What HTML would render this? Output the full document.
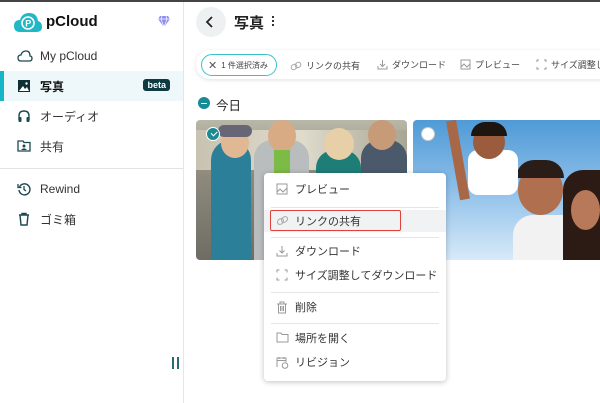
<!DOCTYPE html>
<html><head><meta charset="utf-8"><style>
*{margin:0;padding:0;box-sizing:border-box}
body{width:600px;height:403px;overflow:hidden;background:#fff;font-family:"Liberation Sans","Noto Sans CJK JP",sans-serif;position:relative;color:#222;white-space:nowrap}
.abs{position:absolute}
.topbar{left:0;top:0;width:600px;height:2px;background:#444}
.side{left:0;top:2px;width:184px;height:401px;border-right:1px solid #e6e6e6}
.item{position:absolute;left:0;width:183px;height:30px;font-size:12px;color:#333;display:flex;align-items:center;padding-left:40px}
.item svg{position:absolute;left:17px;top:8px}
.sel{background:#eef8fa;border-left:4px solid #17b6c6;padding-left:36px}
.sel svg{left:13px}
.beta{position:absolute;right:13px;top:8px;background:#0e3b42;color:#fff;font-size:9px;font-weight:bold;padding:1px 4px;border-radius:3px}
.tb{font-size:9px;color:#444;display:flex;align-items:center;gap:4px}
.menu{left:264px;top:173px;width:182px;height:208px;background:#fff;border-radius:4px;box-shadow:0 1px 6px rgba(0,0,0,.25)}
.mi{position:absolute;left:0;width:182px;height:22px;font-size:11px;color:#333;display:flex;align-items:center;padding-left:31px}
.mi svg{position:absolute;left:12px;top:5px}
.sep{position:absolute;left:7px;width:168px;height:1px;background:#e6e6e6}
</style></head><body>
<div class="abs topbar"></div>
<div class="abs side">
  <svg class="abs" style="left:13px;top:10px" width="30" height="22" viewBox="0 0 30 22"><path d="M7 20 Q1 20 1 14 Q1 8 7 8 Q9 1 16 1 Q24 1 25 9 Q29 10 29 15 Q29 20 23 20Z" fill="#20b7c6"/><circle cx="15" cy="11" r="6" fill="none" stroke="#fff" stroke-width="1.6"/><text x="12.3" y="14.5" fill="#fff" font-size="9" font-weight="bold" font-family="Liberation Sans">P</text></svg>
  <div class="abs" style="left:46px;top:11px;font-size:15px;font-weight:bold;color:#111">pCloud</div>
  <svg class="abs" style="left:157px;top:13px" width="14" height="13" viewBox="0 0 14 13"><path d="M3 1H11L13 4L7 12L1 4Z" fill="#8c8cf0"/><path d="M1 4H13M5 1L4 4L7 12L10 4L9 1" stroke="#fff" stroke-width=".7" fill="none"/></svg>
  <div class="item" style="top:39px"><svg width="16" height="14" viewBox="0 0 16 14"><path d="M4 12Q1 12 1 9Q1 6 4 6Q5 2 9 2Q13 2 13 7Q15 7 15 9.5Q15 12 12 12Z" fill="none" stroke="#1b4a52" stroke-width="1.3"/></svg>My pCloud</div>
  <div class="item sel" style="top:69px;height:30px;font-weight:bold;color:#111"><svg width="14" height="14" viewBox="0 0 14 14"><rect x="1" y="1" width="12" height="12" fill="#0f2f35"/><path d="M2 12L6 7L8 10L10 8L12 12Z" fill="#fff"/><circle cx="9.5" cy="4.5" r="1.2" fill="#fff"/></svg>写真<span class="beta">beta</span></div>
  <div class="item" style="top:99px"><svg width="14" height="14" viewBox="0 0 14 14"><path d="M2 11V7Q2 2 7 2Q12 2 12 7V11" fill="none" stroke="#1b4a52" stroke-width="1.4"/><rect x="1.5" y="8" width="3" height="5" rx="1" fill="#1b4a52"/><rect x="9.5" y="8" width="3" height="5" rx="1" fill="#1b4a52"/></svg>オーディオ</div>
  <div class="item" style="top:129px"><svg width="14" height="14" viewBox="0 0 14 14"><path d="M1 2H6L7 3.5H13V12H1Z" fill="none" stroke="#1b4a52" stroke-width="1.3"/><circle cx="7" cy="7" r="1.5" fill="#1b4a52"/><path d="M4 11Q7 7.5 10 11Z" fill="#1b4a52"/></svg>共有</div>
  <div class="abs" style="left:0;top:166px;width:183px;height:1px;background:#e3e3e3"></div>
  <div class="item" style="top:172px"><svg width="14" height="14" viewBox="0 0 14 14"><path d="M2.5 5A5.5 5.5 0 1 1 2 8" fill="none" stroke="#1b4a52" stroke-width="1.4"/><path d="M1 2V5.5H4.5" fill="none" stroke="#1b4a52" stroke-width="1.3"/><path d="M7 4V7.5L9 9" fill="none" stroke="#1b4a52" stroke-width="1.3"/></svg>Rewind</div>
  <div class="item" style="top:202px"><svg width="14" height="14" viewBox="0 0 14 14"><path d="M2 3H12M5 3V1.5H9V3M3 3L4 13H10L11 3" fill="none" stroke="#1b4a52" stroke-width="1.4"/></svg>ゴミ箱</div>
  <div class="abs" style="left:172px;top:355px;width:2px;height:12px;background:#2a6a72"></div>
  <div class="abs" style="left:177px;top:355px;width:2px;height:12px;background:#2a6a72"></div>
</div>
<div class="abs" style="left:196px;top:7px;width:30px;height:30px;border-radius:50%;background:#eef1f2"></div>
<svg class="abs" style="left:205px;top:15px" width="10" height="14" viewBox="0 0 10 14"><path d="M7 2L2 7L7 12" fill="none" stroke="#222" stroke-width="1.8"/></svg>
<div class="abs" style="left:234px;top:12px;font-size:15px;font-weight:bold;color:#222">写真</div>
<div class="abs" style="left:272px;top:16px;width:2px;height:2px;background:#333;box-shadow:0 4px #333,0 8px #333"></div>
<div class="abs" style="left:196px;top:50px;width:420px;height:29px;border-radius:14px;background:#fff;box-shadow:0 1px 4px rgba(0,0,0,.12)"></div>
<div class="abs tb" style="left:201px;top:54px;width:76px;height:22px;border:1.3px solid #3bc0cc;border-radius:11px;padding-left:6px"><span style="font-size:11px;color:#555">✕</span><span style="font-size:8px">1 件選択済み</span></div>
<div class="abs tb" style="left:290px;top:59px"><svg width="12" height="10" viewBox="0 0 12 10"><ellipse cx="4" cy="6" rx="3" ry="2.5" transform="rotate(-40 4 6)" fill="none" stroke="#aaa"/><ellipse cx="8" cy="4" rx="3" ry="2.5" transform="rotate(-40 8 4)" fill="none" stroke="#aaa"/></svg><span>リンクの共有</span></div>
<div class="abs tb" style="left:377px;top:58px"><svg width="11" height="11" viewBox="0 0 11 11"><path d="M5.5 1V7M3 5L5.5 7.5L8 5M1 7V10H10V7" fill="none" stroke="#999"/></svg><span>ダウンロード</span></div>
<div class="abs tb" style="left:460px;top:58px"><svg width="11" height="11" viewBox="0 0 11 11"><rect x="1" y="1" width="9" height="9" fill="none" stroke="#999"/><path d="M1 8L4 5L7 8L10 5" fill="none" stroke="#999"/></svg><span>プレビュー</span></div>
<div class="abs tb" style="left:536px;top:58px"><svg width="11" height="11" viewBox="0 0 11 11"><path d="M1 3V1H3M8 1H10V3M10 8V10H8M3 10H1V8" fill="none" stroke="#999"/></svg><span>サイズ調整し</span></div>
<div class="abs" style="left:198px;top:97px;width:12px;height:12px;border-radius:50%;background:#178b95"></div>
<div class="abs" style="left:201px;top:102.5px;width:6px;height:1.5px;background:#fff"></div>
<div class="abs" style="left:216px;top:95px;font-size:12.5px">今日</div>
<div class="abs" style="left:196px;top:120px;width:211px;height:140px;border-radius:4px;overflow:hidden;background:linear-gradient(180deg,#b9b7a8 0%,#8d8a7d 40%,#6f6c64 100%)">
  <div class="abs" style="left:0;top:10px;width:211px;height:40px;background:linear-gradient(90deg,#c8c2b0,#e0dccd 50%,#a9a594)"></div>
  <div class="abs" style="left:15px;top:20px;width:40px;height:120px;border-radius:20px 20px 0 0;background:#2b7f98"></div>
  <div class="abs" style="left:25px;top:8px;width:28px;height:30px;border-radius:50%;background:#e0b894"></div>
  <div class="abs" style="left:22px;top:5px;width:34px;height:12px;border-radius:10px;background:#667"></div>
  <div class="abs" style="left:58px;top:20px;width:55px;height:120px;border-radius:18px 18px 0 0;background:#b9bdbd"></div>
  <div class="abs" style="left:72px;top:0;width:28px;height:32px;border-radius:50%;background:#d8ab85"></div>
  <div class="abs" style="left:78px;top:30px;width:16px;height:30px;background:#7cbb45"></div>
  <div class="abs" style="left:120px;top:30px;width:45px;height:110px;border-radius:18px 18px 0 0;background:#1f7d77"></div>
  <div class="abs" style="left:128px;top:8px;width:30px;height:32px;border-radius:50%;background:#e7cfa8"></div>
  <div class="abs" style="left:165px;top:20px;width:46px;height:120px;border-radius:18px 18px 0 0;background:#4b5a6b"></div>
  <div class="abs" style="left:172px;top:0;width:28px;height:30px;border-radius:50%;background:#c79a78"></div>
  <div class="abs" style="left:10px;top:7px;width:14px;height:14px;border-radius:50%;background:#1c8a93;border:1.5px solid #fff"></div>
  <div class="abs" style="left:14.5px;top:10.5px;width:6px;height:3.5px;border-left:1.5px solid #fff;border-bottom:1.5px solid #fff;transform:rotate(-45deg)"></div>
</div>
<div class="abs" style="left:413px;top:120px;width:187px;height:140px;overflow:hidden;border-radius:4px 0 0 4px;background:linear-gradient(180deg,#4f9ad6 0%,#8fc0ea 50%,#d8eaf8 100%)">
  <div class="abs" style="left:100px;top:95px;width:70px;height:45px;border-radius:20px 20px 0 0;background:#f2f2f2"></div>
  <div class="abs" style="left:105px;top:45px;width:45px;height:50px;border-radius:50%;background:#b07050"></div>
  <div class="abs" style="left:103px;top:40px;width:48px;height:18px;border-radius:20px 20px 0 0;background:#2a1c16"></div>
  <div class="abs" style="left:55px;top:30px;width:50px;height:45px;border-radius:10px;background:#fff"></div>
  <div class="abs" style="left:60px;top:5px;width:32px;height:34px;border-radius:50%;background:#9a5c3c"></div>
  <div class="abs" style="left:58px;top:2px;width:36px;height:14px;border-radius:18px 18px 0 0;background:#1e1410"></div>
  <div class="abs" style="left:40px;top:0;width:10px;height:80px;background:#a86848;transform:rotate(-10deg)"></div>
  <div class="abs" style="left:150px;top:50px;width:37px;height:90px;background:#2c1a14;border-radius:20px 0 0 0"></div>
  <div class="abs" style="left:158px;top:70px;width:29px;height:40px;border-radius:50%;background:#b8785a"></div>
  <div class="abs" style="left:8px;top:7px;width:14px;height:14px;border-radius:50%;background:#fff;border:1px solid #ccc"></div>
</div>
<div class="abs menu">
  <div class="mi" style="top:5px"><svg width="12" height="12" viewBox="0 0 12 12"><rect x="1" y="1" width="10" height="10" fill="none" stroke="#999"/><path d="M1 9L4 6L7 9L11 5" fill="none" stroke="#999"/></svg>プレビュー</div>
  <div class="sep" style="top:34px"></div>
  <div class="abs" style="left:0;top:37px;width:182px;height:22px;background:#f1f2f3"></div>
  <div class="abs" style="left:6px;top:37px;width:131px;height:21px;border:1.5px solid #e0413a;border-radius:2px"></div>
  <div class="mi" style="top:37px"><svg width="13" height="11" viewBox="0 0 13 11"><ellipse cx="4.5" cy="6.5" rx="3.3" ry="2.6" transform="rotate(-40 4.5 6.5)" fill="none" stroke="#aaa"/><ellipse cx="8.5" cy="4.5" rx="3.3" ry="2.6" transform="rotate(-40 8.5 4.5)" fill="none" stroke="#aaa"/></svg>リンクの共有</div>
  <div class="sep" style="top:64px"></div>
  <div class="mi" style="top:67px"><svg width="12" height="12" viewBox="0 0 12 12"><path d="M6 1V8M3.5 5.5L6 8L8.5 5.5M1 8V11H11V8" fill="none" stroke="#999"/></svg>ダウンロード</div>
  <div class="mi" style="top:91px"><svg width="12" height="12" viewBox="0 0 12 12"><path d="M1 3.5V1H3.5M8.5 1H11V3.5M11 8.5V11H8.5M3.5 11H1V8.5" fill="none" stroke="#999"/></svg>サイズ調整してダウンロード</div>
  <div class="sep" style="top:119px"></div>
  <div class="mi" style="top:123px"><svg width="12" height="13" viewBox="0 0 12 13"><path d="M1 3H11M4 3V1H8V3M2.5 3V12H9.5V3M4.5 5V10M6 5V10M7.5 5V10" fill="none" stroke="#999"/></svg>削除</div>
  <div class="sep" style="top:150px"></div>
  <div class="mi" style="top:154px"><svg width="13" height="11" viewBox="0 0 13 11"><path d="M1 1H5L6 2.5H12V10H1Z" fill="none" stroke="#999"/></svg>場所を開く</div>
  <div class="mi" style="top:178px"><svg width="13" height="13" viewBox="0 0 13 13"><path d="M1 11V2H10V6M1 4.5H10M3 1V3M8 1V3" fill="none" stroke="#999"/><circle cx="9" cy="9.5" r="2.8" fill="none" stroke="#999"/></svg>リビジョン</div>
</div>
</body></html>
